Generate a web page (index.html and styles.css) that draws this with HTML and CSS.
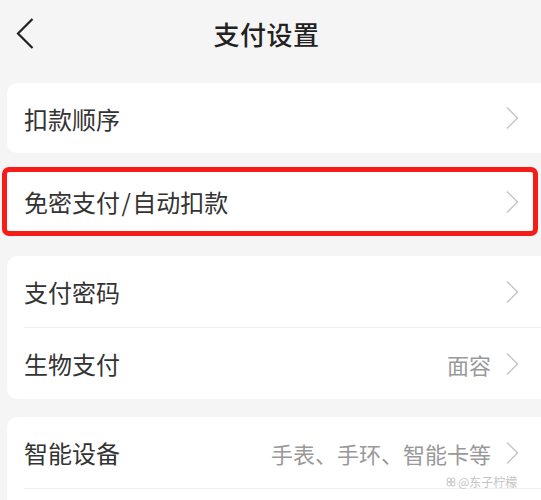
FILE: index.html
```html
<!DOCTYPE html>
<html lang="zh-CN">
<head>
    <meta charset="UTF-8">
    <meta name="viewport" content="width=device-width, initial-scale=1.0">
    <title>支付设置</title>
    <link rel="stylesheet" href="styles.css">
</head>
<body>
    <div class="page">
        <header class="nav-bar">
            <span class="back">
                <svg width="18" height="31" viewBox="0 0 18 31">
                    <polyline points="16.5,1 2,15.5 16.5,30" />
                </svg>
            </span>
            <h1>支付设置</h1>
            <span></span>
        </header>

        <section class="group group-first">
            <div class="row">
                <span class="label">扣款顺序</span>
                <span class="chevron"><svg width="14" height="24" viewBox="0 0 14 24"><polyline points="2,1.5 12.5,12 2,22.5" /></svg></span>
            </div>
        </section>

        <section class="group group-marked">
            <div class="row">
                <span class="label">免密支付 / 自动扣款</span>
                <span class="chevron"><svg width="14" height="24" viewBox="0 0 14 24"><polyline points="2,1.5 12.5,12 2,22.5" /></svg></span>
            </div>
        </section>

        <section class="group">
            <div class="row">
                <span class="label">支付密码</span>
                <span class="chevron"><svg width="14" height="24" viewBox="0 0 14 24"><polyline points="2,1.5 12.5,12 2,22.5" /></svg></span>
            </div>
            <div class="row">
                <span class="label">生物支付</span>
                <span class="value">面容</span>
                <span class="chevron"><svg width="14" height="24" viewBox="0 0 14 24"><polyline points="2,1.5 12.5,12 2,22.5" /></svg></span>
            </div>
        </section>

        <section class="group">
            <div class="row">
                <span class="label">智能设备</span>
                <span class="value">手表、手环、智能卡等</span>
                <span class="chevron"><svg width="14" height="24" viewBox="0 0 14 24"><polyline points="2,1.5 12.5,12 2,22.5" /></svg></span>
            </div>
            <div class="row"></div>
        </section>

        <div class="watermark">
            <svg width="10" height="10" viewBox="0 0 10 10">
                <circle cx="3" cy="3" r="2" />
                <circle cx="7" cy="3" r="2" />
                <circle cx="3" cy="7" r="2" />
                <circle cx="7" cy="7" r="2" />
            </svg>
            <span>@东子柠檬</span>
        </div>
    </div>
</body>
</html>
```

FILE: styles.css
```css
html, body {
    margin: 0;
    padding: 0;
    overflow: hidden;
}

body {
    font-family: "Noto Sans CJK SC", "Noto Sans", sans-serif;
    background-color: #f5f5f5;
    color: #333;
}

.page {
    position: relative;
    height: 500px;
    overflow: hidden;
}

.nav-bar {
    display: grid;
    grid-template-columns: 1fr auto 1fr;
    align-items: center;
    height: 66px;
}

.back {
    padding-left: 16px;
    display: flex;
    align-items: center;
}

.back polyline {
    fill: none;
    stroke: #222;
    stroke-width: 2.2;
}

h1 {
    margin: 0 8px 0 0;
    font-size: 26px;
    font-weight: 500;
    color: #222;
    letter-spacing: 0.5px;
}

.group {
    background: white;
    border-radius: 10px;
    margin: 18px -10px 0 7px;
}

.group-first {
    margin-top: 17px;
}

.row {
    display: flex;
    align-items: center;
    height: 71px;
    margin-left: 17px;
    padding-right: 32px;
}

.row + .row {
    border-top: 1px solid #f0f0f0;
}

.group-first .row {
    height: 70px;
}

.group-marked {
    margin: 14px 3px 0 2px;
    border: 5px solid #f81c19;
    border-radius: 7px;
    margin-bottom: 20px;
}

.group-marked .row {
    height: 59px;
    padding-right: 14px;
}

.label {
    flex: 1;
    font-size: 24px;
    color: #333;
}

.group-marked .label {
    word-spacing: -4px;
}

.value {
    font-size: 22px;
    color: #999;
    margin-right: 14px;
}

.chevron {
    display: flex;
    align-items: center;
}

.chevron polyline {
    fill: none;
    stroke: #c6c6c6;
    stroke-width: 1.5;
}

.watermark {
    position: absolute;
    left: 446px;
    top: 473px;
    display: flex;
    align-items: center;
    gap: 2px;
    font-size: 12px;
    color: #c4c4c4;
}

.watermark circle {
    fill: none;
    stroke: #c4c4c4;
    stroke-width: 1;
}
```
